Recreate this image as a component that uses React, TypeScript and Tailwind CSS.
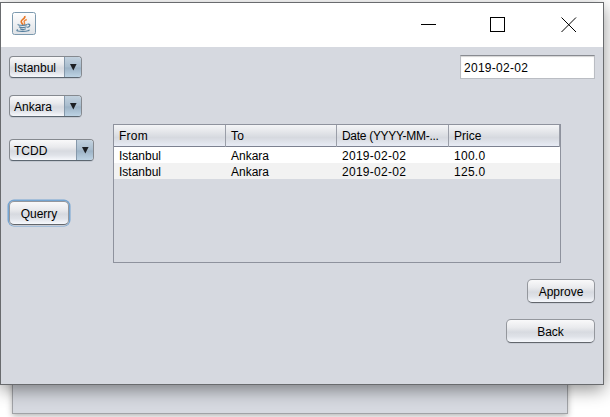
import React from "react";

const face =
  "bg-[linear-gradient(to_bottom,#f9f9fa_0%,#e9eaed_35%,#d7dae0_55%,#dfe2e8_75%,#f6f8fc_100%)]";

function Combo({ label, size }: { label: string; size: string }) {
  return (
    <div
      className={`flex h-[22px] overflow-hidden rounded-[4px] border border-[#85898f] border-b-[#5c6670] shadow-[0_1px_0_#c3c8d0] ${size} ${face}`}
    >
      <span className="flex-1 pl-1 leading-[22px]">{label}</span>
      <span className="flex w-[17px] items-center justify-center border-l border-[#8598aa] bg-[linear-gradient(to_bottom,#c3d2df_0%,#a9bdce_48%,#9db3c6_55%,#bdd3e4_100%)]">
        <svg width="8" height="8" viewBox="0 0 8 8">
          <path d="M1 1H7.6L4.3 7.4Z" fill="#1c1f23" />
        </svg>
      </span>
    </div>
  );
}

function Button({ label, size }: { label: string; size: string }) {
  return (
    <button
      className={`block h-6 rounded-[5px] border border-[#94979d] border-b-[#62666c] text-center leading-[24px] shadow-[0_1px_0_#c8ccd4] ${size} ${face}`}
    >
      {label}
    </button>
  );
}

function JavaIcon() {
  return (
    <svg width="24" height="24" viewBox="0 0 24 24" fill="none">
      <defs>
        <linearGradient id="tile" x1="0" y1="0" x2="0" y2="1">
          <stop offset="0" stopColor="#ffffff" />
          <stop offset="1" stopColor="#dfe2e6" />
        </linearGradient>
      </defs>
      <rect x="0.5" y="0.5" width="23" height="22" rx="2" fill="url(#tile)" stroke="#7c99ae" />
      <path d="M12.7 4C14 6.5 9 7.4 9.2 9.6C9.3 11 10.4 11.7 11 12.8" stroke="#e87624" strokeWidth="1.6" />
      <path d="M14.8 7.5C12.8 8.2 11.5 9.2 12.4 10.5C13 11.5 12.5 12 11.9 12.8" stroke="#ee8b43" strokeWidth="1.4" />
      <path d="M6.4 12.3C4.5 13.5 13 13.6 15 12.6M7 14.7C8.5 15.8 12.8 15.8 14.7 14.8M8 16.7C9.5 17.5 12.5 17.5 13.8 16.8M15.4 12.4C19 11.4 18.3 15 15.2 15.4M5.8 17.5C3 18.8 7 19.5 11 19.4C15.5 19.3 18 18.4 16.7 17.8" stroke="#55809f" strokeWidth="1.2" />
    </svg>
  );
}

const headers = [
  { text: "From", spacing: "tracking-[0.25px]" },
  { text: "To", spacing: "tracking-[0.2px]" },
  { text: "Date (YYYY-MM-...", spacing: "tracking-[-0.3px]" },
  { text: "Price", spacing: "tracking-normal" },
];

const rows = [
  ["Istanbul", "Ankara", "2019-02-02", "100.0"],
  ["Istanbul", "Ankara", "2019-02-02", "125.0"],
];

const columns = "grid grid-cols-[112px_111px_112px_111px]";

function Table() {
  return (
    <div className="h-[139px] w-[448px] border border-[#8e929d]">
      <div
        className={`${columns} h-[22px] border-b border-[#7c8190] bg-[linear-gradient(to_bottom,#f4f5f7_0%,#e3e5e9_35%,#d6d9df_60%,#e8ecf5_100%)]`}
      >
        {headers.map((h) => (
          <div
            key={h.text}
            className={`whitespace-nowrap border-r border-[#9a9ea8] pl-[5px] leading-[22px] ${h.spacing}`}
          >
            {h.text}
          </div>
        ))}
      </div>
      {rows.map((row, r) => (
        <div key={r} className={`${columns} h-4 ${r % 2 ? "bg-[#f2f2f2]" : "bg-white"}`}>
          {row.map((cell, c) => (
            <div key={c} className={`pl-[5px] leading-[18px] ${c > 1 ? "tracking-[0.27px]" : ""}`}>
              {cell}
            </div>
          ))}
        </div>
      ))}
    </div>
  );
}

export default function App() {
  return (
    <div className="relative h-[417px] w-[610px] overflow-hidden bg-white pt-0.5 font-['Liberation_Sans',Arial,sans-serif] text-[12px] text-black">
      <div className="absolute left-[12px] top-[340px] h-[74px] w-[556px] border border-[#a0a2a6] bg-[#d6d9e0] shadow-[0_2px_6px_rgba(0,0,0,0.3)]" />
      <div className="relative h-[383px] w-[604px] border border-[#696b6e] bg-[#d6d9e0] shadow-[0_5px_16px_rgba(0,0,0,0.42)]">
        <div className="flex h-11 justify-between bg-white pl-[11px] pr-[26px]">
          <div className="pt-[9px]">
            <JavaIcon />
          </div>
          <svg className="mt-[13px]" width="156" height="17" viewBox="0 0 156 17" fill="none" stroke="#000">
            <path d="M0 8.5H15" />
            <rect x="69.5" y="1.5" width="14" height="14" />
            <path d="M140.5 1.5L155 16M155 1.5L140.5 16" />
          </svg>
        </div>
        <div className="flex">
          <div className="w-[112px] pl-2 pt-[9px]">
            <Combo label="Istanbul" size="w-[73px]" />
            <div className="mt-[17px]">
              <Combo label="Ankara" size="w-[73px]" />
            </div>
            <div className="mt-[22px]">
              <Combo label="TCDD" size="w-[85px]" />
            </div>
            <div className="mt-10 w-[60px] rounded-[5px] ring-[1.5px] ring-[#73a4d1]">
              <Button label="Querry" size="w-[60px]" />
            </div>
          </div>
          <div className="flex w-[482px] flex-col pt-2">
            <div className="h-6 w-[135px] self-end border border-[#babdc3] border-t-[#888b91] bg-white pl-[3px] leading-[24px] tracking-[0.27px] shadow-[inset_0_1px_1px_#d4d4d4]">
              2019-02-02
            </div>
            <div className="mt-[45px]">
              <Table />
            </div>
            <div className="mt-4 flex flex-col items-end gap-4">
              <Button label="Approve" size="w-[68px]" />
              <Button label="Back" size="w-[89px]" />
            </div>
          </div>
        </div>
      </div>
    </div>
  );
}
